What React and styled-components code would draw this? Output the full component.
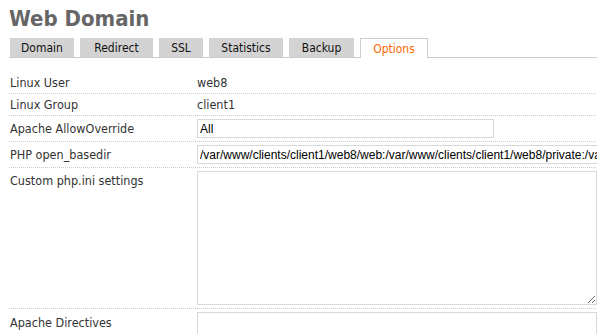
import React from 'react';
import styled, { createGlobalStyle } from 'styled-components';

const GlobalStyle = createGlobalStyle`
  html, body {
    margin: 0;
    padding: 0;
    background: #fff;
    overflow: hidden;
  }
  body {
    font-family: "DejaVu Sans Condensed", "DejaVu Sans", sans-serif;
    color: #333;
  }
`;

const Page = styled.div`
  width: 597px;
  height: 334px;
  padding: 4px 0 0 9px;
  box-sizing: border-box;
  overflow: hidden;
`;

const Title = styled.h1`
  margin: 0;
  font-size: 22px;
  line-height: 30px;
  font-weight: bold;
  color: #666;
`;

const TabBar = styled.div`
  display: flex;
  gap: 6px;
  margin-top: 4px;
  border-bottom: 1px solid #ccc;
  margin-right: -9px;
  padding-left: 1px;
`;

const Tab = styled.div`
  width: ${props => props.w}px;
  height: 19px;
  display: flex;
  align-items: center;
  justify-content: center;
  font-size: 12px;
  box-sizing: border-box;
  background: ${props => (props.active ? '#fff' : '#d3d3d3')};
  color: ${props => (props.active ? '#ff6600' : '#111')};
  border: ${props => (props.active ? '1px solid #ccc' : 'none')};
  border-bottom: none;
  margin-bottom: ${props => (props.active ? '-1px' : '0')};
  height: ${props => (props.active ? '20px' : '19px')};
`;

const Form = styled.div`
  margin-top: 14px;
  margin-right: -9px;
`;

const Row = styled.div`
  display: grid;
  grid-template-columns: 187px 1fr;
  align-items: start;
  padding: 3px 0 3px 1px;
  border-bottom: 1px dotted #c8c8c8;
`;

const Label = styled.div`
  font-size: 12.5px;
  line-height: 15px;
  padding-top: ${props => props.offset || 0}px;
`;

const Value = styled.div`
  font-size: 12.5px;
  line-height: 15px;
  white-space: nowrap;
`;

const TextInput = styled.input`
  display: block;
  width: ${props => props.w}px;
  height: 19px;
  box-sizing: border-box;
  border: 1px solid #d8d8d8;
  padding: 0 2px;
  font-family: "Liberation Sans", Arial, sans-serif;
  font-size: 12px;
  color: #000;
  outline: none;
`;

const TextArea = styled.textarea`
  display: block;
  width: 400px;
  height: ${props => props.h}px;
  box-sizing: border-box;
  border: 1px solid #d8d8d8;
  margin: 0;
  resize: both;
  outline: none;
`;

const tabs = [
  { name: 'Domain', w: 64 },
  { name: 'Redirect', w: 73 },
  { name: 'SSL', w: 44 },
  { name: 'Statistics', w: 74 },
  { name: 'Backup', w: 65 },
  { name: 'Options', w: 68, active: true },
];

export default function App() {
  return (
    <Page>
      <GlobalStyle />
      <Title>Web Domain</Title>
      <TabBar>
        {tabs.map(t => (
          <Tab key={t.name} w={t.w} active={t.active}>{t.name}</Tab>
        ))}
      </TabBar>
      <Form>
        <Row>
          <Label>Linux User</Label>
          <Value>web8</Value>
        </Row>
        <Row>
          <Label>Linux Group</Label>
          <Value>client1</Value>
        </Row>
        <Row>
          <Label offset={2}>Apache AllowOverride</Label>
          <Value><TextInput w={297} defaultValue="All" /></Value>
        </Row>
        <Row>
          <Label offset={2}>PHP open_basedir</Label>
          <Value>
            <TextInput
              w={460}
              defaultValue="/var/www/clients/client1/web8/web:/var/www/clients/client1/web8/private:/var/www/clients/client1/web8/tmp"
            />
          </Value>
        </Row>
        <Row>
          <Label offset={2}>Custom php.ini settings</Label>
          <Value><TextArea h={134} /></Value>
        </Row>
        <Row>
          <Label offset={3}>Apache Directives</Label>
          <Value><TextArea h={134} /></Value>
        </Row>
      </Form>
    </Page>
  );
}
